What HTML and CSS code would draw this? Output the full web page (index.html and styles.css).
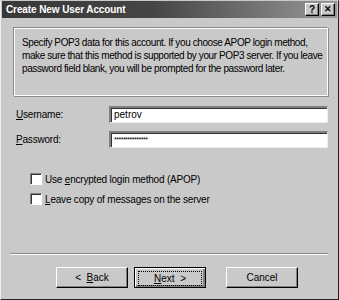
FILE: index.html
```html
<!DOCTYPE html>
<html lang="en">
<head>
    <meta charset="UTF-8">
    <title>Create New User Account</title>
    <link rel="stylesheet" href="styles.css">
</head>
<body>
    <div class="window">
        <div class="titlebar">
            <span class="title">Create New User Account</span>
            <div class="title-buttons">
                <span class="tbtn">?</span>
                <span class="tbtn close">&#x2715;</span>
            </div>
        </div>

        <div class="content">
            <div class="info">
                Specify POP3 data for this account. If you choose APOP login method,<br>
                make sure that this method is supported by your POP3 server. If you leave<br>
                password field blank, you will be prompted for the password later.
            </div>

            <div class="row">
                <label><u>U</u>sername:</label>
                <div class="field">petrov</div>
            </div>
            <div class="row">
                <label><u>P</u>assword:</label>
                <div class="field pass">***************</div>
            </div>

            <div class="checks">
                <div class="check"><span class="box"></span><span>Use <u>e</u>ncrypted login method (APOP)</span></div>
                <div class="check"><span class="box"></span><span><u>L</u>eave copy of messages on the server</span></div>
            </div>

            <div class="separator"></div>

            <div class="buttons">
                <button class="btn">&lt;&nbsp; <u>B</u>ack</button>
                <button class="btn default"><span class="focus"><u>N</u>ext &nbsp;&gt;</span></button>
                <button class="btn cancel">Cancel</button>
            </div>
        </div>
    </div>
</body>
</html>
```

FILE: styles.css
```css
body {
    margin: 0;
    font-family: "Liberation Sans", Arial, sans-serif;
    font-size: 10px;
    color: #000;
    background: #c9c9c9;
}
.window {
    width: 339px;
    height: 300px;
    box-sizing: border-box;
    background: #c9c9c9;
    border-left: 1px solid #eee;
    border-top: 1px solid #c9c9c9;
    border-right: 1px solid #222;
    border-bottom: 1px solid #222;
    display: flex;
    flex-direction: column;
}
.titlebar {
    height: 17px;
    margin: 0 1px;
    background: linear-gradient(to right, #383838 0%, #454545 45%, #858585 88%, #9a9a9a 100%);
    display: flex;
    align-items: center;
    justify-content: space-between;
}
.title {
    color: #fff;
    font-weight: bold;
    font-size: 10px;
    letter-spacing: -0.1px;
    padding-left: 4px;
}
.title-buttons {
    display: flex;
    gap: 2px;
    padding-right: 2px;
}
.tbtn {
    width: 12px;
    height: 11px;
    background: #c9c9c9;
    border-top: 1px solid #fff;
    border-left: 1px solid #fff;
    border-right: 1px solid #000;
    border-bottom: 1px solid #000;
    box-shadow: inset -1px -1px 0 #808080;
    font-size: 10px;
    font-weight: bold;
    line-height: 11px;
    text-align: center;
}
.close {
    font-size: 9px;
}
.content {
    flex: 1;
    padding: 9px 10px 0 12px;
    display: flex;
    flex-direction: column;
}
.info {
    height: 54px;
    padding: 8px 8px 5px 8px;
    border-top: 1px solid #8a8a8a;
    border-left: 1px solid #8a8a8a;
    border-right: 1px solid #fff;
    border-bottom: 1px solid #fff;
    box-shadow: inset 1px 1px 0 #fff, 1px 1px 0 #8a8a8a;
    line-height: 13px;
    letter-spacing: -0.4px;
    white-space: nowrap;
}
.row {
    display: flex;
    align-items: center;
    margin-top: 10px;
}
.row + .row {
    margin-top: 8px;
}
.row label {
    width: 93px;
    padding-left: 3px;
    letter-spacing: -0.2px;
}
.field {
    flex: 1;
    height: 12px;
    background: #fff;
    border-top: 2px solid #808080;
    border-left: 2px solid #808080;
    border-right: 1px solid #eee;
    border-bottom: 1px solid #eee;
    box-shadow: inset 1px 1px 0 #333;
    padding: 1px 3px;
    line-height: 12px;
}
.pass {
    font-size: 7px;
    letter-spacing: -0.5px;
}
.checks {
    margin-top: 25px;
    padding-left: 17px;
    display: flex;
    flex-direction: column;
    gap: 8px;
}
.check {
    display: flex;
    align-items: center;
    letter-spacing: -0.2px;
}
.box {
    width: 10px;
    height: 10px;
    background: #fff;
    border-top: 1px solid #808080;
    border-left: 1px solid #808080;
    border-right: 1px solid #fff;
    border-bottom: 1px solid #fff;
    box-shadow: inset 1px 1px 0 #333;
    margin-right: 3px;
}
.separator {
    margin-top: auto;
    margin-left: -3px;
    border-top: 1px solid #8a8a8a;
    border-bottom: 1px solid #fff;
}
.buttons {
    display: flex;
    padding: 12px 0 11px 43px;
    gap: 6px;
}
.btn {
    width: 72px;
    height: 21px;
    font-family: "Liberation Sans", Arial, sans-serif;
    font-size: 10px;
    background: #c9c9c9;
    border-top: 1px solid #fff;
    border-left: 1px solid #fff;
    border-right: 1px solid #000;
    border-bottom: 1px solid #000;
    box-shadow: inset -1px -1px 0 #808080;
    padding: 0;
}
.default {
    border: 1px solid #000;
    box-shadow: inset 1px 1px 0 #fff, inset -2px -2px 0 #808080;
    padding: 3px;
}
.focus {
    display: block;
    height: 13px;
    line-height: 13px;
    border: 1px dotted #000;
}
.cancel {
    margin-left: 14px;
}
```
